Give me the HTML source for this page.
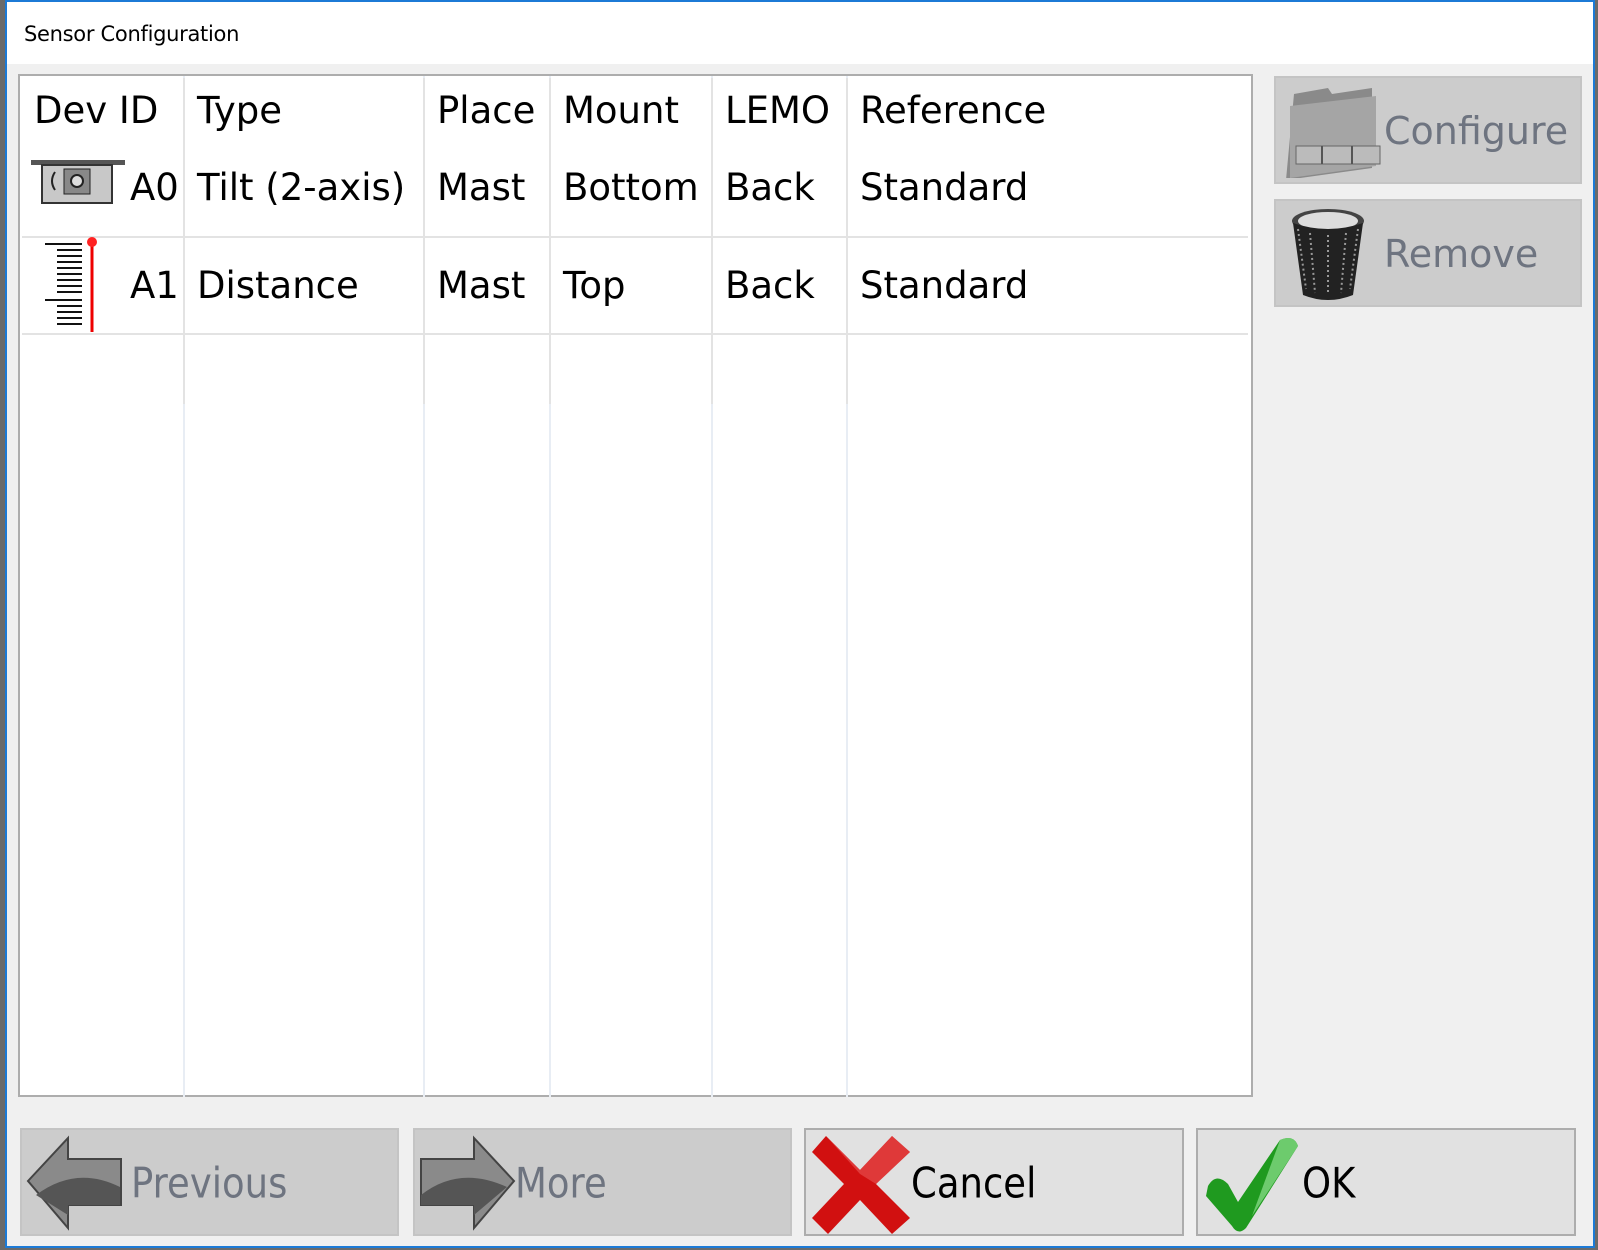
<!DOCTYPE html>
<html><head><meta charset="utf-8"><style>
*{margin:0;padding:0;box-sizing:border-box}
body{width:1598px;height:1250px;background:#6a6a6a;position:relative;overflow:hidden;font-family:"DejaVu Sans","Liberation Sans",sans-serif}
#win{position:absolute;left:5px;top:0;width:1590px;height:1248px;background:#f0f0f0;border:2px solid #1c7ad6}
#title{position:absolute;left:0;top:0;width:100%;height:62px;background:#fff}
#title span{position:absolute;left:17px;top:20px;font-size:21px;color:#000;font-family:"DejaVu Sans",sans-serif;letter-spacing:-0.3px}
.a{position:absolute}
#tbl{left:11px;top:72px;width:1235px;height:1023px;background:#fff;border:2px solid #adadad}
.vl{position:absolute;top:0;width:2px;background:#e8edf4;height:1021px}
.vh{position:absolute;top:2px;width:2px;background:#e3e3e3;height:326px}
.hl{position:absolute;left:2px;width:1226px;height:2px;background:#e3e3e3}
.t{position:absolute;font-size:37px;color:#000;white-space:nowrap;line-height:1}
.btn{position:absolute;background:#cccccc;border:2px solid #c4c4c4}
.btn.en{background:#e1e1e1;border-color:#adadad}
.bl{position:absolute;font-size:37px;white-space:nowrap;line-height:1;color:#6e7480;transform:scaleY(1.12);transform-origin:left center}
.en .bl{color:#000}
.rb{font-size:38px;transform:none}
</style></head><body>
<div id="win">
<div id="title"><span>Sensor Configuration</span></div>
<div id="tbl" class="a">
 <div class="vl" style="left:163px"></div><div class="vl" style="left:403px"></div><div class="vl" style="left:529px"></div><div class="vl" style="left:691px"></div><div class="vl" style="left:826px"></div>
 <div class="vh" style="left:163px"></div><div class="vh" style="left:403px"></div><div class="vh" style="left:529px"></div><div class="vh" style="left:691px"></div><div class="vh" style="left:826px"></div>
 <div class="hl" style="top:160px"></div><div class="hl" style="top:257px"></div>
 <div class="t" style="left:14px;top:16px">Dev ID</div>
 <div class="t" style="left:177px;top:16px">Type</div>
 <div class="t" style="left:417px;top:16px">Place</div>
 <div class="t" style="left:543px;top:16px">Mount</div>
 <div class="t" style="left:705px;top:16px">LEMO</div>
 <div class="t" style="left:840px;top:16px">Reference</div>
 <div class="t" style="left:110px;top:93px">A0</div>
 <div class="t" style="left:177px;top:93px">Tilt (2-axis)</div>
 <div class="t" style="left:417px;top:93px">Mast</div>
 <div class="t" style="left:543px;top:93px">Bottom</div>
 <div class="t" style="left:705px;top:93px">Back</div>
 <div class="t" style="left:840px;top:93px">Standard</div>
 <div class="t" style="left:110px;top:191px">A1</div>
 <div class="t" style="left:177px;top:191px">Distance</div>
 <div class="t" style="left:417px;top:191px">Mast</div>
 <div class="t" style="left:543px;top:191px">Top</div>
 <div class="t" style="left:705px;top:191px">Back</div>
 <div class="t" style="left:840px;top:191px">Standard</div>
 <svg class="a" style="left:10px;top:82px" width="100" height="50"><rect x="1" y="2" width="94" height="5" fill="#555"/><rect x="12" y="7" width="70" height="38" fill="#c8c8c8" stroke="#333" stroke-width="2"/><rect x="34" y="11" width="26" height="25" fill="#888" stroke="#222"/><circle cx="47" cy="23" r="6" fill="#ddd" stroke="#222" stroke-width="2"/><path d="M25 14 q-6 9 0 18" stroke="#222" stroke-width="2" fill="none"/></svg>
 <svg class="a" style="left:22px;top:160px" width="70" height="96"><g stroke="#111" stroke-width="2"><line x1="3" y1="8" x2="40" y2="8"/><line x1="15" y1="14" x2="40" y2="14"/><line x1="15" y1="20" x2="40" y2="20"/><line x1="15" y1="26" x2="40" y2="26"/><line x1="15" y1="32" x2="40" y2="32"/><line x1="15" y1="38" x2="40" y2="38"/><line x1="15" y1="44" x2="40" y2="44"/><line x1="15" y1="50" x2="40" y2="50"/><line x1="15" y1="56" x2="40" y2="56"/><line x1="3" y1="64" x2="40" y2="64"/><line x1="15" y1="70" x2="40" y2="70"/><line x1="15" y1="76" x2="40" y2="76"/><line x1="15" y1="82" x2="40" y2="82"/><line x1="15" y1="88" x2="40" y2="88"/></g><line x1="50" y1="6" x2="50" y2="96" stroke="#e00" stroke-width="3"/><circle cx="50" cy="6" r="5" fill="#f22"/></svg>
</div>

<div class="btn" style="left:1267px;top:74px;width:308px;height:108px">
 <svg class="a" style="left:6px;top:6px" width="104" height="94"><path d="M12 10 l34 -6 l4 6 l40 -6 v80 l-86 12 z" fill="#8a8a8a"/><path d="M8 22 l86 -10 v70 l-86 12 z" fill="#a5a5a5"/><rect x="14" y="62" width="84" height="18" fill="#bbb" stroke="#666"/><line x1="40" y1="62" x2="40" y2="80" stroke="#555" stroke-width="2"/><line x1="70" y1="62" x2="70" y2="80" stroke="#555" stroke-width="2"/></svg>
 <div class="bl rb" style="left:108px;top:34px">Configure</div>
</div>
<div class="btn" style="left:1267px;top:197px;width:308px;height:108px">
 <svg class="a" style="left:14px;top:6px" width="80" height="96"><ellipse cx="38" cy="14" rx="36" ry="12" fill="#444"/><ellipse cx="38" cy="14" rx="30" ry="9" fill="#ddd"/><path d="M3 16 l10 72 q25 10 50 0 l10 -72 q-35 12 -70 0z" fill="#222"/><path d="M8 22 l8 60 M20 26 l5 60 M38 28 v60 M56 26 l-5 60 M68 22 l-8 60" stroke="#999" stroke-width="2" stroke-dasharray="2 3"/></svg>
 <div class="bl rb" style="left:108px;top:34px">Remove</div>
</div>

<div class="btn" style="left:13px;top:1126px;width:379px;height:108px">
 <svg class="a" style="left:4px;top:5px" width="100" height="96"><path d="M2 46 L42 3 V24 H95 V70 H42 V93 Z" fill="#8a8a8a" stroke="#444" stroke-width="2"/><path d="M10 60 Q50 30 94 52 V70 H42 V80 Z" fill="#555"/></svg>
 <div class="bl" style="left:109px;top:35px">Previous</div>
</div>
<div class="btn" style="left:406px;top:1126px;width:379px;height:108px">
 <svg class="a" style="left:4px;top:5px" width="100" height="96"><path d="M95 46 L55 3 V24 H2 V70 H55 V93 Z" fill="#8a8a8a" stroke="#444" stroke-width="2"/><path d="M2 60 Q40 30 88 52 L55 80 V70 H2 Z" fill="#555"/></svg>
 <div class="bl" style="left:100px;top:35px">More</div>
</div>
<div class="btn en" style="left:797px;top:1126px;width:380px;height:108px">
 <svg class="a" style="left:6px;top:4px" width="100" height="100"><path d="M14 2 L48 36 L80 2 L98 18 L64 50 L98 84 L80 100 L48 66 L16 100 L0 84 L32 50 L0 18 Z" fill="#d11010"/><path d="M14 2 L48 36 L80 2 L98 18 L64 50 L48 40 Z" fill="#e85555" opacity=".6"/></svg>
 <div class="bl" style="left:105px;top:35px">Cancel</div>
</div>
<div class="btn en" style="left:1189px;top:1126px;width:380px;height:108px">
 <svg class="a" style="left:4px;top:4px" width="100" height="100"><path d="M6 52 Q14 38 26 50 L36 68 L78 6 Q92 0 96 12 L44 94 Q36 102 30 92 L4 62 Z" fill="#1f9a1f"/><path d="M78 6 Q92 0 96 12 L50 82 Z" fill="#8fe08f" opacity=".7"/></svg>
 <div class="bl" style="left:104px;top:35px">OK</div>
</div>
</div>
</body></html>
